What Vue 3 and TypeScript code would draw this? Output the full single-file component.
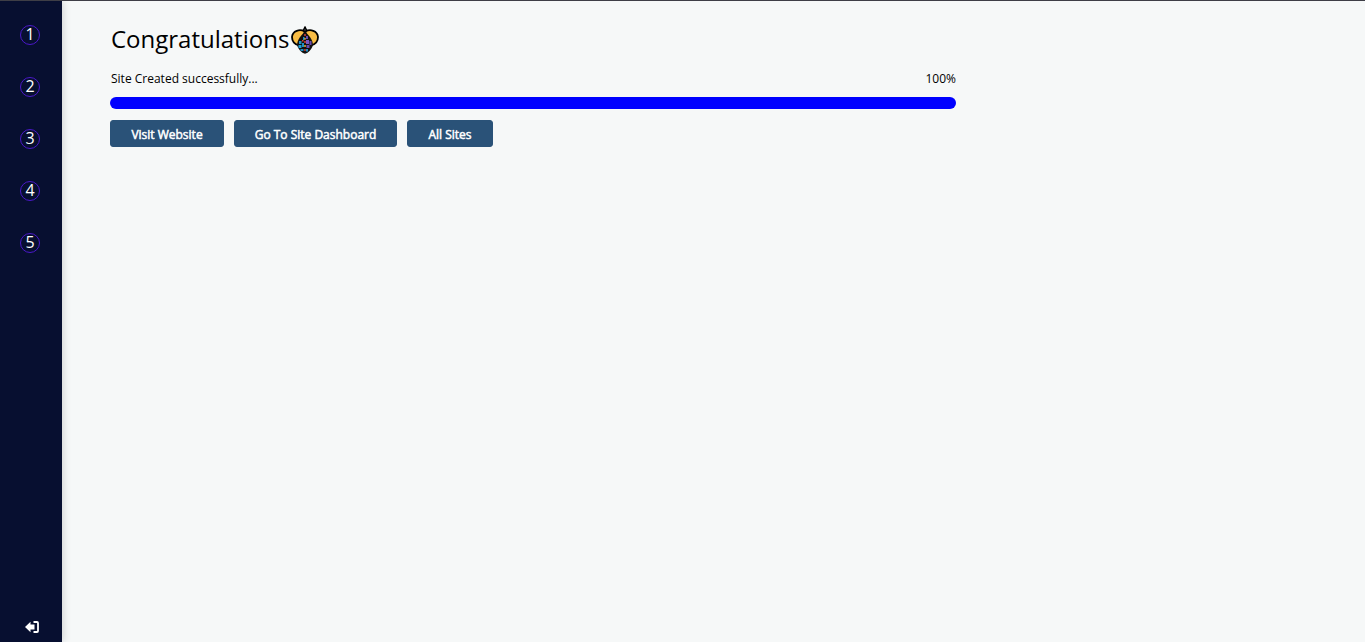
<script setup lang="ts">
const steps = [1, 2, 3, 4, 5]
const buttons = [
  { label: 'Visit Website', width: 114 },
  { label: 'Go To Site Dashboard', width: 163 },
  { label: 'All Sites', width: 86 },
]
// coloured cells on the bee's body: [x, y, w, h, colour]
const cells: [number, number, number, number, string][] = [
  [8, 15, 2.5, 3, '#1f8fc4'],
  [7.5, 19, 3, 3, '#1f9fd4'],
  [11, 17, 2, 4, '#1f8fc4'],
  [9.5, 23, 3, 2, '#1f8fc4'],
  [12, 11, 1.5, 3, '#1f8fc4'],
  [15, 10, 2, 3, '#6a4bb0'],
  [15, 14, 3, 4, '#7a55c4'],
  [18.5, 15, 2, 4, '#6a4bb0'],
  [15.5, 19, 3, 3, '#6a4bb0'],
  [15, 23, 2, 2.5, '#1f8fc4'],
  [13.3, 8, 1.4, 2, '#e0473c'],
  [13.3, 15, 1.4, 2, '#e0473c'],
  [11, 14, 1.5, 1.5, '#e0473c'],
  [13.3, 19, 1.4, 2, '#f7b93e'],
  [13.3, 12, 1.4, 1.6, '#f7b93e'],
  [13.3, 23, 1.4, 2, '#e0473c'],
]
</script>

<template>
  <div class="page">
    <aside class="sidebar">
      <ul class="steps">
        <li v-for="step in steps" :key="step" class="step">{{ step }}</li>
      </ul>
      <svg class="logout" viewBox="0 0 14 12" width="14" height="12">
        <path d="M0 6 L5.5 0.8 V3.6 H9.5 V8.4 H5.5 V11.2 Z" fill="#fff" />
        <path d="M8.5 1 H12 Q13 1 13 2 V10 Q13 11 12 11 H8.5" fill="none" stroke="#fff" stroke-width="1.8" />
      </svg>
    </aside>
    <main class="content">
      <h1 class="title">
        Congratulations
        <svg class="bee" viewBox="0 0 28 28" width="28" height="28">
          <path d="M14 0.8 L11.5 6 H16.5 Z" fill="#444" stroke="#000" stroke-width="1.3" stroke-linejoin="round" />
          <path d="M13.5 5.5 C9 2.8 1.6 4.5 1 11 C1 15.5 4.5 18.5 8 19.5 L13.5 9 Z" fill="#f9bd45" stroke="#000" stroke-width="1.8" stroke-linejoin="round" />
          <path d="M14.5 5.5 C19 2.8 26.4 4.5 27 11 C27 15.5 23.5 18.5 20 19.5 L14.5 9 Z" fill="#f9bd45" stroke="#000" stroke-width="1.8" stroke-linejoin="round" />
          <path d="M14 5.5 C10.5 9 6.5 13 6 19 C7.5 23.5 10.5 26.8 14 27.8 C17.5 26.8 20.5 23.5 22 19 C21.5 13 17.5 9 14 5.5 Z" fill="#111" />
          <rect v-for="(c, i) in cells" :key="i" :x="c[0]" :y="c[1]" :width="c[2]" :height="c[3]" :fill="c[4]" />
        </svg>
      </h1>
      <div class="progress-label">
        <span class="nudge">Site Created successfully...</span>
        <span>100%</span>
      </div>
      <div class="progress"></div>
      <div class="actions">
        <button
          v-for="b in buttons"
          :key="b.label"
          class="btn"
          :style="{ width: b.width + 'px' }"
        >{{ b.label }}</button>
      </div>
    </main>
  </div>
</template>

<style>
html, body {
  margin: 0;
  background: #f6f8f8;
}
</style>

<style scoped>
.page {
  display: flex;
  height: 642px;
  overflow: hidden;
  border-top: 1px solid #3e3e46;
  box-sizing: border-box;
  font-family: "Open Sans", "Noto Sans", sans-serif;
  background: #f6f8f8;
  color: #000;
}

.sidebar {
  width: 62px;
  flex: none;
  display: flex;
  flex-direction: column;
  align-items: center;
  justify-content: space-between;
  background: #070f30;
  box-shadow: 1px 0 8px rgba(0, 0, 0, 0.16);
}

.steps {
  list-style: none;
  margin: 0 2px 0 0;
  padding: 24px 0 0;
  display: flex;
  flex-direction: column;
  gap: 32px;
}

.step {
  width: 20px;
  height: 20px;
  box-sizing: border-box;
  border: 1px solid #4a18c8;
  border-radius: 50%;
  color: #fff;
  font-size: 16px;
  line-height: 17px;
  text-align: center;
}

.logout {
  margin-bottom: 9px;
  margin-left: 1px;
}

.content {
  flex: 1;
  padding: 22px 0 0 48px;
}

.title {
  display: flex;
  align-items: center;
  gap: 2px;
  width: 846px;
  height: 32px;
  padding-left: 1px;
  margin: 0 0 15px;
  font-size: 24px;
  font-weight: 400;
  line-height: 32px;
}

.bee {
  flex: none;
  margin-top: 2px;
}

.progress-label {
  display: flex;
  justify-content: space-between;
  width: 846px;
  height: 18px;
  margin-bottom: 9px;
  font-size: 12px;
  line-height: 18px;
}

.nudge {
  padding-left: 1px;
}

.progress {
  width: 846px;
  height: 12px;
  border-radius: 6px;
  background: #0000ff;
}

.actions {
  display: flex;
  gap: 10px;
  margin-top: 11px;
}

.btn {
  height: 27px;
  padding: 2px 0 0;
  border: 1px solid #2a5278;
  border-radius: 3px;
  background: #2a5278;
  color: #fff;
  font-family: inherit;
  font-size: 12px;
  font-weight: 400;
  -webkit-text-stroke: 0.5px #fff;
}
</style>
